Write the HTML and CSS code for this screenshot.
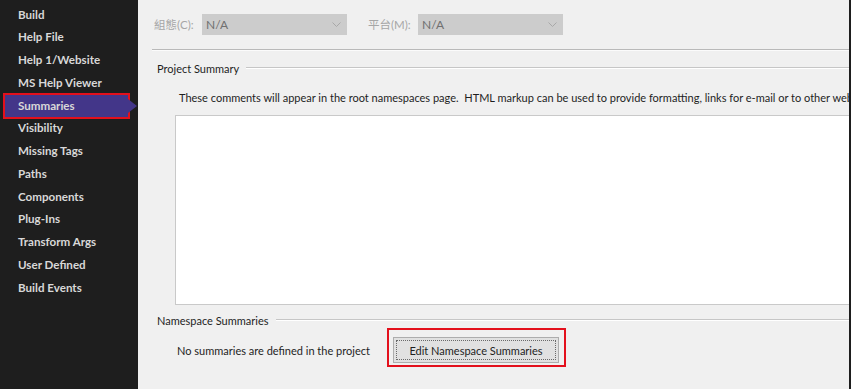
FILE: index.html
```html
<!DOCTYPE html>
<html lang="en">
<head>
  <meta charset="UTF-8">
  <title>Summaries</title>
  <link rel="stylesheet" href="styles.css">
</head>
<body>
  <!-- Left: property page list -->
  <div class="sidebar">
    <div class="nav-item">Build</div>
    <div class="nav-item">Help File</div>
    <div class="nav-item">Help 1/Website</div>
    <div class="nav-item">MS Help Viewer</div>
    <div class="nav-item selected">Summaries</div>
    <div class="nav-item">Visibility</div>
    <div class="nav-item">Missing Tags</div>
    <div class="nav-item">Paths</div>
    <div class="nav-item">Components</div>
    <div class="nav-item">Plug-Ins</div>
    <div class="nav-item">Transform Args</div>
    <div class="nav-item">User Defined</div>
    <div class="nav-item">Build Events</div>
  </div>

  <!-- Right: the page itself -->
  <div class="main">
    <div class="config-row">
      <span class="config-label">組態(C):</span>
      <div class="combo">
        <span>N/A</span>
        <svg class="chevron" width="9" height="5" viewBox="0 0 9 5"><path d="M0.5 0.5 L4.5 4.5 L8.5 0.5" fill="none" stroke="#a8a8a8" stroke-width="1"/></svg>
      </div>
      <span class="config-label second">平台(M):</span>
      <div class="combo">
        <span>N/A</span>
        <svg class="chevron" width="9" height="5" viewBox="0 0 9 5"><path d="M0.5 0.5 L4.5 4.5 L8.5 0.5" fill="none" stroke="#a8a8a8" stroke-width="1"/></svg>
      </div>
    </div>
    <div class="separator"></div>

    <div class="group project-group">
      <div class="group-title"><span>Project Summary</span><div class="group-line"></div></div>
      <div class="hint">These comments will appear in the root namespaces page.&nbsp; HTML markup can be used to provide formatting, links for e-mail or to other websites.</div>
      <div class="summary-box"></div>
    </div>

    <div class="group namespace-group">
      <div class="group-title"><span>Namespace Summaries</span><div class="group-line"></div></div>
      <div class="ns-row">
        <span class="ns-text">No summaries are defined in the project</span>
        <div class="highlight">
          <button class="ns-button"><span class="focus">Edit Namespace Summaries</span></button>
        </div>
      </div>
    </div>
  </div>
</body>
</html>
```

FILE: styles.css
```css
body {
  margin: 0;
  width: 851px;
  height: 389px;
  display: flex;
  overflow: hidden;
  font-family: Lato, 'Noto Sans CJK TC', sans-serif;
  font-size: 11px;
  line-height: 16px;
  color: #1e1e1e;
}

.sidebar {
  width: 138px;
  flex-shrink: 0;
  background: #1e1e1e;
  padding-top: 3.6px;
  box-sizing: border-box;
}

.nav-item {
  height: 22.75px;
  line-height: 22.75px;
  padding-left: 18px;
  color: #d8d8d8;
  font-weight: 700;
  font-size: 11.6px;
  white-space: nowrap;
}

.nav-item.selected {
  position: relative;
  margin-left: 5px;
  width: 123px;
  padding-left: 13px;
  box-sizing: border-box;
  background: #433689;
  outline: 2px solid #e3101c;
}

/* arrow pointing at the page */
.nav-item.selected::after {
  content: "";
  position: absolute;
  right: -9px;
  top: 4px;
  border-left: 9px solid #433689;
  border-top: 7.5px solid transparent;
  border-bottom: 7.5px solid transparent;
}

.main {
  flex: 1;
  background: #f0f0f0;
  border-right: 2px solid #1e1e1e;
  overflow: hidden;
  display: flex;
  flex-direction: column;
}

.config-row {
  display: flex;
  align-items: center;
  padding: 14px 0 0 16px;
  height: 21px;
}

.config-label {
  color: #a6a6a6;
  width: 48px;
  font-size: 11.5px;
}

.config-label.second {
  margin-left: 21px;
  width: 50px;
}

.combo {
  width: 145px;
  height: 21px;
  background: #cccccc;
  display: flex;
  align-items: center;
  justify-content: space-between;
  padding: 0 6px 0 4px;
  box-sizing: border-box;
  color: #707070;
  font-size: 12px;
}

.separator {
  margin: 14px 0 0 14px;
  height: 1px;
  background: #b9b9b9;
  border-bottom: 1px solid #fbfbfb;
}

.group-title {
  display: flex;
  align-items: center;
  padding-left: 19px;
}

.group-line {
  flex: 1;
  height: 1px;
  background: #c6c6c6;
  border-bottom: 1px solid #ffffff;
  margin-left: 7px;
  margin-top: -3px;
}

.project-group {
  margin-top: 10px;
}

.hint {
  padding-left: 41px;
  margin-top: 13px;
  white-space: nowrap;
}

.summary-box {
  margin: 9px -20px 0 37px;
  height: 188px;
  background: #ffffff;
  border: 1px solid #c9c9c9;
}

.namespace-group {
  margin-top: 8px;
}

.ns-row {
  display: flex;
  align-items: center;
  padding-left: 39px;
  margin-top: -1px;
}

.ns-text {
  width: 210px;
  white-space: nowrap;
  margin-top: 6px;
}

.highlight {
  border: 2px solid #e3101c;
  padding: 7px 5px 2px 4px;
}

.ns-button {
  width: 166px;
  height: 26px;
  padding: 2px;
  background: #e1e1e1;
  border: 1px solid #adadad;
  font-family: Lato, sans-serif;
  font-size: 11px;
  color: #1e1e1e;
  display: block;
}

.focus {
  display: flex;
  align-items: center;
  justify-content: center;
  height: 100%;
  border: 1px dotted #6a6a6a;
  box-sizing: border-box;
}
```
